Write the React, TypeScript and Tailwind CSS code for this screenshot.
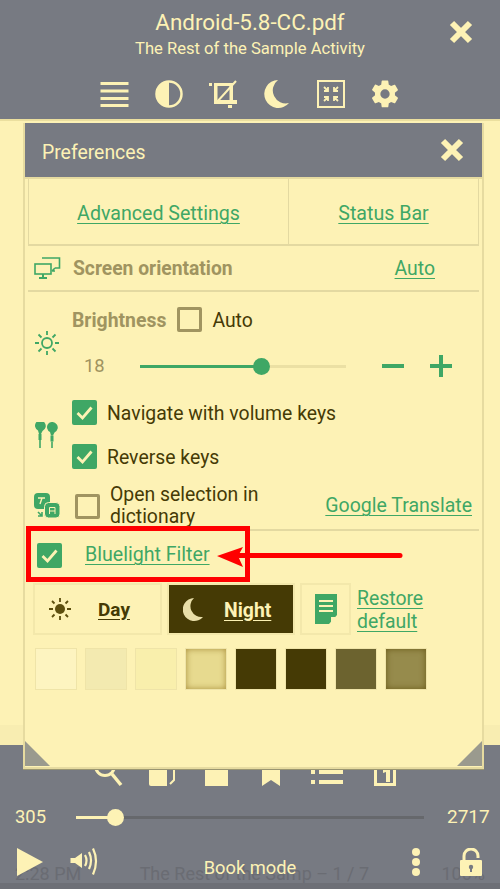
import React from "react";

const Y = "#fdf2b5";
const G = "#3fa765";

function Check({ on }: { on: boolean }) {
  return on ? (
    <span className="flex h-[25px] w-[25px] shrink-0 items-center justify-center rounded-[2px] bg-[#3fa765]">
      <svg width="19" height="19" viewBox="0 0 19 19"><path d="M2.5 10 L7.5 15 L16.5 4.5" fill="none" stroke={Y} strokeWidth="2.8" /></svg>
    </span>
  ) : (
    <span className="block h-[25px] w-[25px] shrink-0 rounded-[2px] border-[3px] border-[#a09460]" />
  );
}

export default function App() {
  const swatch = "h-[42px] w-[42px] border border-[#efe4a8]";
  const link = "text-[#3fa765] underline underline-offset-[3px] decoration-1";
  return (
    <div className="relative flex h-[889px] w-[500px] flex-col overflow-hidden bg-[#777a82] font-['Roboto',sans-serif]">
      {/* top bar */}
      <div className="relative h-[119px] shrink-0 text-[#fdf2b5]">
        <div className="flex flex-col items-center pt-[7px]">
          <div className="text-[22.4px] leading-[30px]">Android-5.8-CC.pdf</div>
          <div className="mt-[2px] text-[16.6px] leading-[20px]">The Rest of the Sample Activity</div>
        </div>
        <svg className="absolute left-[449px] top-[20px]" width="24" height="24" viewBox="0 0 24 24"><path d="M3 3 L21 21 M21 3 L3 21" stroke={Y} strokeWidth="6" /></svg>
        <div className="absolute left-[100px] top-[78px] flex items-center gap-[26px]">
          <svg width="29" height="28" viewBox="0 0 29 28" fill={Y}><rect x="0.5" y="2" width="28" height="3" /><rect x="0.5" y="9.5" width="28" height="3" /><rect x="0.5" y="17" width="28" height="3" /><rect x="0.5" y="24" width="28" height="3" /></svg>
          <svg width="28" height="28" viewBox="0 0 28 28"><circle cx="14" cy="14" r="12.5" fill="none" stroke={Y} strokeWidth="2.5" /><path d="M14 1.5 A12.5 12.5 0 0 0 14 26.5 Z" fill={Y} /></svg>
          <svg width="28" height="28" viewBox="0 0 28 28" fill={Y}><rect x="0" y="3" width="3" height="3" /><path d="M5 3 H24 V20 H28 V24 H5 Z M8.5 6 V20 H20.5 V6 Z" fillRule="evenodd" /><path d="M7 23 L27 1" stroke={Y} strokeWidth="2" /><rect x="19" y="25" width="4" height="3" /></svg>
          <svg width="28" height="28" viewBox="0 0 28 28" fill={Y}><path d="M15 0 A14 14 0 1 0 26 23 A13 13 0 0 1 15 0 Z" /></svg>
          <svg width="28" height="28" viewBox="0 0 28 28" fill="none" stroke={Y}><rect x="1" y="1" width="26" height="26" strokeWidth="2" /><path d="M7 7 L11 11 M11 7 V11 H7 M21 7 L17 11 M17 7 V11 H21 M7 21 L11 17 M7 17 H11 V21 M21 21 L17 17 M21 17 H17 V21" strokeWidth="1.8" /></svg>
          <svg className="ml-[-2px] mr-[-2px]" width="32" height="32" viewBox="0 0 24 24" fill={Y}><path fillRule="evenodd" d="M19.4 13c.04-.33.1-.66.1-1s-.06-.67-.1-1l2.1-1.65c.2-.15.25-.42.13-.64l-2-3.46c-.12-.22-.39-.3-.61-.22l-2.49 1c-.52-.4-1.08-.73-1.69-.98l-.38-2.65A.49.49 0 0 0 14 1.9h-4c-.25 0-.46.18-.49.42l-.38 2.65c-.61.25-1.17.59-1.69.98l-2.49-1a.5.5 0 0 0-.61.22l-2 3.46c-.13.22-.07.49.12.64L4.56 11c-.04.33-.06.67-.06 1s.02.67.06 1l-2.11 1.65c-.19.15-.25.42-.12.64l2 3.46c.12.22.39.3.61.22l2.49-1c.52.4 1.08.73 1.69.98l.38 2.65c.03.24.24.42.49.42h4c.25 0 .46-.18.49-.42l.38-2.65c.61-.25 1.17-.59 1.69-.98l2.49 1c.22.08.49 0 .61-.22l2-3.46c.12-.22.07-.49-.12-.64L19.4 13zM12 15.5a3.5 3.5 0 1 1 0-7 3.5 3.5 0 0 1 0 7z" /></svg>
        </div>
      </div>

      {/* page */}
      <div className="h-[626px] shrink-0 border-t-2 border-[#ebdf9f] bg-[#fdf2b5]">
        <div className="h-[604px]" />
        <div className="h-[20px] bg-[#f8edb1]" />
      </div>

      {/* bottom bar */}
      <div className="relative flex-1 text-[#fdf2b5]">
        <div className="h-[44px] pl-[94px] pt-[7px]">
          <svg width="320" height="36" viewBox="0 0 320 36" fill={Y}>
            <circle cx="11" cy="14" r="9.5" fill="none" stroke={Y} strokeWidth="3" /><path d="M18 22 L27 33" stroke={Y} strokeWidth="3.5" />
            <path d="M55 0 H73 V34 H57 Q55 34 55 32 Z" /><path d="M80 0 V28 L76 32" stroke={Y} strokeWidth="2" fill="none" />
            <rect x="111" y="0" width="23" height="34" />
            <path d="M168 0 H186 V34 L177 28 L168 34 Z" />
            <rect x="217" y="8" width="4" height="4" /><rect x="225" y="8" width="24" height="4" /><rect x="217" y="18" width="4" height="4" /><rect x="225" y="18" width="24" height="4" /><rect x="217" y="28" width="4" height="4" /><rect x="225" y="28" width="24" height="4" />
            <rect x="281.5" y="2" width="19" height="30.5" fill="none" stroke={Y} strokeWidth="3" /><path d="M289 18 L292 16 H296 V30 H292 V20 L289 21 Z" />
          </svg>
        </div>
        <div className="mt-[14px] flex h-[28px] items-center">
          <div className="w-[76px] pl-[15px] text-[18.4px]">305</div>
          <div className="relative h-[3px] w-[348px] bg-[#66686c]">
            <div className="absolute left-0 top-0 h-[3px] w-[39px] bg-[#fdf2b5]" />
            <div className="absolute left-[31px] top-[-7px] h-[17px] w-[17px] rounded-full bg-[#fdf2b5]" />
          </div>
          <div className="pl-[23px] text-[19px]">2717</div>
        </div>
        <div className="absolute inset-x-0 top-[117px] flex justify-between px-[15px] text-[18px] leading-[24px] text-[#6a6c73]">
          <span>2:28 PM</span><span className="ml-[-14px]">The Rest of the Samp – 1 / 7</span><span>100%</span>
        </div>
        <div className="absolute bottom-0 left-0 right-0 h-[6px] bg-[#6d6f76]" />
        <div className="absolute left-0 right-0 top-[113px] text-center text-[18.3px] leading-[20px]">Book mode</div>
        <svg className="absolute left-[16px] top-[103px]" width="28" height="28" viewBox="0 0 28 28" fill={Y}><path d="M1 0 L27 14 L1 28 Z" /></svg>
        <svg className="absolute left-[70px] top-[103px]" width="28" height="28" viewBox="0 0 28 28" fill="none" stroke={Y} strokeWidth="2.2"><path d="M0.5 10 H5 L12 5 V20 L5 15 H0.5 Z" fill={Y} stroke="none" /><path d="M15 7 Q18 12.5 15 18 M19 4 Q23 12.5 19 21 M23 0.5 Q29 13 23 26.5" /></svg>
        <div className="absolute left-[412px] top-[103px] flex flex-col gap-[2px]">
          <span className="block h-[8px] w-[8px] rounded-full bg-[#fdf2b5]" /><span className="block h-[8px] w-[8px] rounded-full bg-[#fdf2b5]" /><span className="block h-[8px] w-[8px] rounded-full bg-[#fdf2b5]" />
        </div>
        <svg className="absolute left-[459px] top-[103px]" width="24" height="28" viewBox="0 0 24 28"><path d="M5 12 V8 A7 7 0 0 1 19 8 V10" fill="none" stroke={Y} strokeWidth="3" /><rect x="1" y="12" width="22" height="16" rx="1" fill={Y} /><circle cx="12" cy="19" r="2.2" fill="#777a82" /><rect x="11" y="20" width="2" height="4" fill="#777a82" /></svg>
      </div>

      {/* dialog */}
      <div className="absolute left-[23px] top-[123px] flex h-[646px] w-[461px] flex-col border-x-2 border-b-2 border-[#e6dba0] bg-[#fdf2b5] shadow-[0_1px_0_#9a9670]">
        <div className="flex h-[56px] shrink-0 items-center justify-between border-b-[2px] border-[#e6dba0] bg-[#777a82] pl-[17px] pr-[18px] text-[#fdf2b5]">
          <span className="pt-[5px] text-[19.4px]">Preferences</span>
          <svg width="24" height="24" viewBox="0 0 24 24"><path d="M3 3 L21 21 M21 3 L3 21" stroke={Y} strokeWidth="6" /></svg>
        </div>
        <div className={`mx-[3px] flex h-[67px] shrink-0 border-x border-b-2 border-[#e3d9a1] text-[19.6px] ${link}`}>
          <div className="flex w-[260px] items-center justify-center border-r border-[#e3d9a1] pt-[5px]">Advanced Settings</div>
          <div className="flex flex-1 items-center justify-center pt-[5px]">Status Bar</div>
        </div>
        <div className="mx-[3px] flex h-[46px] shrink-0 items-center border-b-2 border-[#e3d9a1] pl-[6px]">
          <svg width="27" height="22" viewBox="0 0 27 22" fill="none" stroke={G} strokeWidth="1.6"><path d="M8 1 H25.5 V11 H21" /><rect x="1" y="7" width="16" height="10" /><path d="M9 17 V20 M5 21 H13" strokeWidth="2" /><path d="M18 14 H21 M21 11 L18 14" /></svg>
          <span className="ml-[12px] pt-[2px] text-[19.3px] font-bold text-[#a09460]">Screen orientation</span>
          <span className={`ml-auto mr-[44px] pt-[2px] text-[19.4px] ${link}`}>Auto</span>
        </div>
        {/* brightness */}
        <div className="flex h-[108px] shrink-0 pl-[9px]">
          <svg className="mt-[38px]" width="26" height="26" viewBox="0 0 26 26" fill="none" stroke={G} strokeWidth="1.8"><circle cx="13" cy="13" r="5" /><path d="M13 1 V5 M13 21 V25 M1 13 H5 M21 13 H25 M4.5 4.5 L7.5 7.5 M18.5 18.5 L21.5 21.5 M4.5 21.5 L7.5 18.5 M18.5 7.5 L21.5 4.5" /></svg>
          <div className="ml-[12px] flex-1">
            <div className="mt-[15px] flex h-[25px] items-center">
              <span className="pt-[2px] text-[19.4px] font-bold text-[#a09460]">Brightness</span>
              <span className="ml-[11px]"><Check on={false} /></span>
              <span className="ml-[10px] pt-[2px] text-[19.4px] text-[#453a05]">Auto</span>
            </div>
            <div className="mt-[20px] flex h-[28px] items-center">
              <span className="w-[68px] pl-[12px] text-[18.4px] text-[#a09460]">18</span>
              <div className="relative h-[3px] w-[206px] bg-[#ebe0a4]">
                <div className="absolute left-0 top-0 h-[3px] w-[121px] bg-[#3fa765]" />
                <div className="absolute left-[113px] top-[-7px] h-[17px] w-[17px] rounded-full bg-[#3fa765]" />
              </div>
              <span className="ml-[36px] block h-[4px] w-[22px] bg-[#3fa765]" />
              <svg className="ml-[26px]" width="22" height="22" viewBox="0 0 22 22" fill={G}><rect y="9" width="22" height="4" /><rect x="9" width="4" height="22" /></svg>
            </div>
          </div>
        </div>
        {/* volume */}
        <div className="relative flex h-[83px] shrink-0 flex-col pl-[47px]">
          <svg className="absolute left-[9px] top-[22px]" width="24" height="26" viewBox="0 0 24 26" fill={G}>
            <path d="M2 0.5 A5.5 5.5 0 1 1 8.5 9 L7 12 H5 L4 8.5 A5.5 5.5 0 0 1 2 0.5 Z" />
            <path d="M14 2 A5.5 5.5 0 1 1 20.5 10.5 L19 13.5 H17 L16 10 A5.5 5.5 0 0 1 14 2 Z" />
            <rect x="4.5" y="12" width="3" height="6" /><rect x="5.2" y="18" width="1.6" height="8" />
            <rect x="16.5" y="13.5" width="3" height="6" /><rect x="17.2" y="19.5" width="1.6" height="6.5" />
          </svg>
          <div className="flex h-[25px] items-center"><Check on /><span className="ml-[10px] pt-[2px] text-[19.4px] text-[#453a05]">Navigate with volume keys</span></div>
          <div className="mt-[19px] flex h-[25px] items-center"><Check on /><span className="ml-[10px] pt-[2px] text-[19.4px] text-[#453a05]">Reverse keys</span></div>
        </div>
        {/* translate */}
        <div className="mx-[3px] flex h-[48px] shrink-0 items-center border-b-2 border-[#e3d9a1] pl-[6px]">
          <svg width="26" height="26" viewBox="0 0 26 26"><rect x="0" y="0" width="16" height="16" rx="4" fill={G} /><rect x="10.5" y="9.5" width="15.5" height="15.5" rx="4" fill={G} stroke={Y} strokeWidth="1" /><path d="M4 5 H11 M8 5 L6 11" stroke={Y} strokeWidth="1.4" fill="none" /><path d="M15.5 21 V14.5 H21 V21 M15.5 18 H21" stroke={Y} strokeWidth="1" fill="none" /><path d="M4 19 L8 23 M4 23 H8 V19" stroke={G} strokeWidth="1.6" fill="none" /></svg>
          <span className="ml-[15px]"><Check on={false} /></span>
          <span className="ml-[10px] w-[190px] text-[19.4px] leading-[22px] text-[#453a05]">Open selection in dictionary</span>
          <span className={`ml-auto mr-[7px] whitespace-nowrap text-[19.5px] ${link}`}>Google Translate</span>
        </div>
        {/* bluelight */}
        <div className="flex h-[48px] shrink-0 items-center pl-[12px]">
          <Check on />
          <span className={`ml-[23px] text-[19.6px] ${link}`}>Bluelight Filter</span>
        </div>
        {/* modes */}
        <div className="mt-[4px] flex h-[52px] shrink-0 pl-[8px]">
          <div className="flex w-[129px] items-center border-2 border-[#f3e8ab] pl-[13px]">
            <svg width="24" height="24" viewBox="0 0 24 24" fill="#5d4f0e"><circle cx="12" cy="12" r="5" /><path d="M12 1 V5 M12 19 V23 M1 12 H5 M19 12 H23 M4 4 L6.5 6.5 M17.5 17.5 L20 20 M4 20 L6.5 17.5 M17.5 6.5 L20 4" stroke="#5d4f0e" strokeWidth="1.8" /></svg>
            <span className="ml-[26px] pt-[2px] text-[19px] font-bold text-[#453a05] underline underline-offset-[3px]">Day</span>
          </div>
          <div className="ml-[5px] flex w-[128px] items-center border-2 border-[#f3e8ab] bg-[#453a05] pl-[14px]">
            <svg width="22" height="24" viewBox="0 0 22 24" fill="#e8dea8"><path d="M11 1 A11.5 11.5 0 1 0 20 20 A11 11 0 0 1 11 1 Z" /></svg>
            <span className="ml-[19px] pt-[3px] text-[19.4px] font-bold text-[#fdf2b5] underline underline-offset-[3px]">Night</span>
          </div>
          <div className="ml-[5px] flex h-[52px] w-[51px] items-center justify-center border-2 border-[#f3e8ab]">
            <svg width="24" height="30" viewBox="0 0 24 30"><path d="M1 0 H23 V21 L15 30 H1 Z" fill={G} /><path d="M5 7 H19 M5 12 H19 M5 17 H19" stroke={Y} strokeWidth="2" /><path d="M17 29 V23 H23 Z" fill={Y} /></svg>
          </div>
          <div className={`ml-[6px] pt-[4px] text-[19.4px] leading-[23px] ${link}`}>Restore<br />default</div>
        </div>
        {/* swatches */}
        <div className="mt-[13px] flex gap-[8px] pl-[10px]">
          <div className={`${swatch} bg-[#fdf4c0]`} />
          <div className={`${swatch} bg-[#f3eab0]`} />
          <div className={`${swatch} bg-[#f9efac]`} />
          <div className={`${swatch} bg-[#e7da8f] shadow-[inset_0_0_6px_#a98f3c]`} />
          <div className={`${swatch} bg-[#453a05]`} />
          <div className={`${swatch} bg-[#453a05]`} />
          <div className={`${swatch} bg-[#6c632f]`} />
          <div className={`${swatch} bg-[#968b4c] shadow-[inset_0_0_6px_#6b5a18]`} />
        </div>
        {/* corner folds */}
        <svg className="absolute bottom-[1px] left-0" width="25" height="25" viewBox="0 0 25 25"><path d="M0 0 L25 25 H0 Z" fill="#9a9a8e" /></svg>
        <svg className="absolute bottom-[1px] right-0" width="25" height="25" viewBox="0 0 25 25"><path d="M25 0 L0 25 H25 Z" fill="#9a9a8e" /></svg>
      </div>

      {/* annotation */}
      <div className="absolute left-[26px] top-[526px] h-[56px] w-[224px] border-[5px] border-[#ff0000]" />
      <svg className="absolute left-[215px] top-[540px]" width="190" height="32" viewBox="0 0 190 32"><path d="M24 15.5 H185" stroke="#ff0000" strokeWidth="5" strokeLinecap="round" /><path d="M2 16 L28 7 L23 16 L28 27 Z" fill="#ff0000" /></svg>
    </div>
  );
}
